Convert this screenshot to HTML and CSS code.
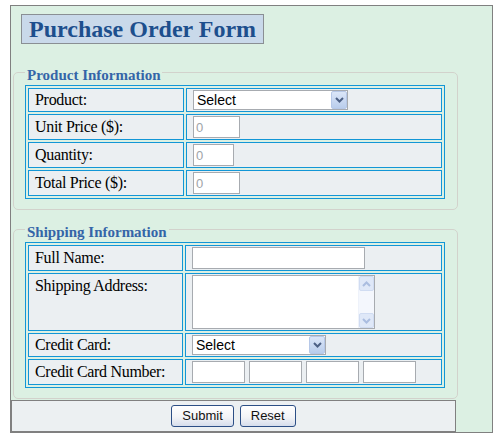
FILE: index.html
```html
<!DOCTYPE html>
<html>
<head>
<meta charset="utf-8">
<title>Purchase Order Form</title>
<link rel="stylesheet" href="styles.css">
</head>
<body>
<div class="page">
  <h1 class="title">Purchase Order Form</h1>
  <form class="order">
    <fieldset class="group group-product">
      <legend>Product Information</legend>
      <table class="grid grid-product">
        <tr>
          <td class="lbl">Product:</td>
          <td class="val"><div class="field">
            <span class="sel sel-product">
              <select><option>Select</option></select>
              <span class="sel-btn"><svg width="9" height="6" viewBox="0 0 9 6"><path d="M1 1 L4.5 4.5 L8 1" fill="none" stroke="#4d6185" stroke-width="2"/></svg></span>
            </span>
          </div></td>
        </tr>
        <tr>
          <td class="lbl">Unit Price ($):</td>
          <td class="val"><div class="field"><input class="txt w-price" type="text" value="0"></div></td>
        </tr>
        <tr>
          <td class="lbl">Quantity:</td>
          <td class="val"><div class="field"><input class="txt w-qty" type="text" value="0"></div></td>
        </tr>
        <tr>
          <td class="lbl">Total Price ($):</td>
          <td class="val"><div class="field"><input class="txt w-price" type="text" value="0"></div></td>
        </tr>
      </table>
    </fieldset>
    <fieldset class="group group-ship">
      <legend>Shipping Information</legend>
      <table class="grid grid-ship">
        <tr>
          <td class="lbl">Full Name:</td>
          <td class="val"><div class="field"><input class="txt w-name" type="text"></div></td>
        </tr>
        <tr>
          <td class="lbl lbl-top">Shipping Address:</td>
          <td class="val"><div class="field">
            <span class="area">
              <textarea></textarea>
              <span class="vscroll">
                <span class="sb-btn"><svg width="9" height="6" viewBox="0 0 9 6"><path d="M1 5 L4.5 1.5 L8 5" fill="none" stroke="#aabde0" stroke-width="2"/></svg></span>
                <span class="sb-btn"><svg width="9" height="6" viewBox="0 0 9 6"><path d="M1 1 L4.5 4.5 L8 1" fill="none" stroke="#aabde0" stroke-width="2"/></svg></span>
              </span>
            </span>
          </div></td>
        </tr>
        <tr>
          <td class="lbl">Credit Card:</td>
          <td class="val"><div class="field">
            <span class="sel sel-card">
              <select><option>Select</option></select>
              <span class="sel-btn"><svg width="9" height="6" viewBox="0 0 9 6"><path d="M1 1 L4.5 4.5 L8 1" fill="none" stroke="#4d6185" stroke-width="2"/></svg></span>
            </span>
          </div></td>
        </tr>
        <tr>
          <td class="lbl">Credit Card Number:</td>
          <td class="val"><div class="field field-ccn">
            <input class="txt w-ccn" type="text">
            <input class="txt w-ccn" type="text">
            <input class="txt w-ccn" type="text">
            <input class="txt w-ccn" type="text">
          </div></td>
        </tr>
      </table>
    </fieldset>
    <div class="actions">
      <button type="button" class="btn">Submit</button>
      <button type="button" class="btn">Reset</button>
    </div>
  </form>
</div>
</body>
</html>
```
FILE: styles.css
```css
html, body {
  margin: 0;
  padding: 0;
  background: #ffffff;
}

.page {
  margin: 5px 0 0 10px;
  width: 483px;
  box-sizing: border-box;
  border: 1px solid #808080;
  background: #dcf0e3;
  font-family: "Liberation Serif", "Times New Roman", serif;
}

.title {
  display: block;
  width: fit-content;
  margin: 8px 0 0 10px;
  padding: 0 7px;
  border: 1px solid #8a8f94;
  background: #c9d9ea;
  color: #1d4f8d;
  font-family: "Liberation Serif", "Times New Roman", serif;
  font-weight: bold;
  font-size: 24px;
  letter-spacing: 0;
  line-height: 28px;
}

.order {
  margin: 0;
}

.group {
  width: 445px;
  box-sizing: border-box;
  margin: 16px 0 0 2px;
  padding: 1px 11px 10px;
  border: 1px solid #d2d2cc;
  border-radius: 5px;
  min-inline-size: 0;
}

.group-ship {
  margin-top: 7px;
}

.group legend {
  padding: 7px 2px 0;
  font-family: "Liberation Serif", "Times New Roman", serif;
  font-weight: bold;
  font-size: 15px;
  line-height: 17px;
  color: #3465a8;
}

.grid {
  width: 420px;
  border-collapse: separate;
  border-spacing: 2px;
  border: 1px solid #1296d6;
}

.grid td {
  border: 1px solid #1296d6;
  background: #ebeff2;
  padding: 1px 6px;
  vertical-align: middle;
}

.grid .lbl {
  font-family: "Liberation Serif", "Times New Roman", serif;
  font-size: 16px;
  letter-spacing: -0.3px;
  line-height: 18px;
  color: #000;
}

.grid-product .lbl {
  width: 142px;
}

.grid-ship .lbl {
  width: 141px;
}

.grid .lbl-top {
  vertical-align: top;
  padding-top: 3px;
}

.field {
  display: flex;
  align-items: center;
}

.field-ccn {
  gap: 4px;
}

.txt {
  box-sizing: border-box;
  height: 22px;
  margin: 0;
  padding: 0 2px;
  border: 1px solid #a7abb0;
  background: #fff;
  font-family: "Liberation Sans", Arial, sans-serif;
  font-size: 13px;
  color: #a0a4a8;
  outline: none;
}

.w-price { width: 47px; }
.w-qty { width: 41px; }
.w-name { width: 173px; }
.w-ccn { width: 53px; }

.sel {
  position: relative;
  display: block;
  height: 20px;
}

.sel-product { width: 155px; }
.sel-card { width: 134px; }

.sel select {
  appearance: none;
  -webkit-appearance: none;
  box-sizing: border-box;
  width: 100%;
  height: 20px;
  margin: 0;
  padding: 0 3px;
  border: 1px solid #a7abb0;
  border-radius: 0;
  background: #fff;
  font-family: "Liberation Sans", Arial, sans-serif;
  font-size: 14px;
  color: #000;
  outline: none;
}

.sel-btn {
  position: absolute;
  top: 1px;
  right: 1px;
  bottom: 1px;
  width: 16px;
  box-sizing: border-box;
  border: 1px solid #b6c8e8;
  border-radius: 2px;
  background: linear-gradient(#dbe6f8, #b9cdec);
  display: flex;
  align-items: center;
  justify-content: center;
}

.area {
  position: relative;
  display: block;
  width: 183px;
  height: 54px;
}

.area textarea {
  display: block;
  box-sizing: border-box;
  width: 100%;
  height: 100%;
  margin: 0;
  padding: 2px;
  border: 1px solid #a7abb0;
  background: #fff;
  resize: none;
  overflow: hidden;
  outline: none;
  font-family: "Liberation Sans", Arial, sans-serif;
  font-size: 13px;
}

.vscroll {
  position: absolute;
  top: 1px;
  right: 1px;
  bottom: 1px;
  width: 16px;
  background: #f4f7fd;
  border-left: 1px solid #eef2fa;
  box-sizing: border-box;
  display: flex;
  flex-direction: column;
  justify-content: space-between;
}

.sb-btn {
  height: 15px;
  box-sizing: border-box;
  border: 1px solid #d0dcf2;
  border-radius: 2px;
  background: #dfe8f8;
  display: flex;
  align-items: center;
  justify-content: center;
}

.actions {
  width: 445px;
  height: 32px;
  box-sizing: border-box;
  margin-top: 1px;
  border: 1px solid #808080;
  background: #ecf0f2;
  display: flex;
  align-items: center;
  justify-content: center;
  gap: 6px;
}

.btn {
  box-sizing: border-box;
  height: 22px;
  margin: 0;
  padding: 0 10px;
  border: 1px solid #2c4f86;
  border-radius: 3px;
  background: linear-gradient(#ffffff 0%, #f3f4f7 55%, #d6deec 100%);
  font-family: "Liberation Sans", Arial, sans-serif;
  font-size: 13px;
  color: #111;
  line-height: 20px;
}
```
